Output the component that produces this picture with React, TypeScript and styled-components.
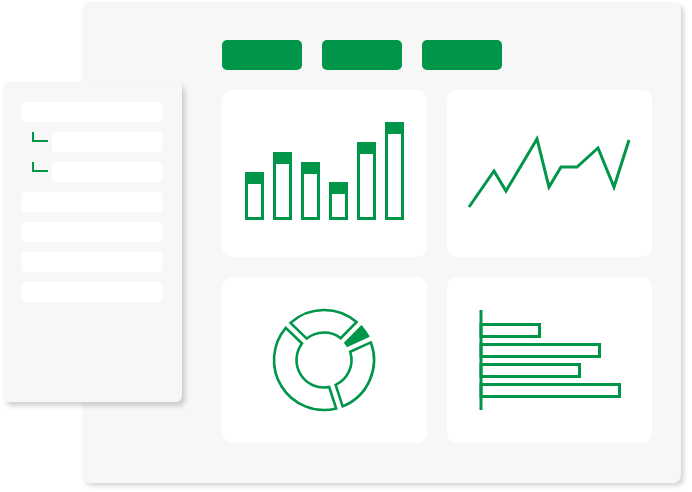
import React from "react";
import styled, { createGlobalStyle } from "styled-components";

const GREEN = "#00964a";

const Global = createGlobalStyle`
  html, body {
    margin: 0;
    padding: 0;
    background: #ffffff;
    font-family: "Liberation Sans", Arial, sans-serif;
  }
`;

const Stage = styled.div`
  position: relative;
  width: 692px;
  height: 492px;
  overflow: hidden;
`;

const Board = styled.div`
  box-sizing: border-box;
  margin: 2px 0 0 82px;
  width: 599px;
  height: 481px;
  padding: 38px 0 0 140px;
  background: #f7f7f7;
  border-radius: 8px;
  box-shadow: 3px 3px 4px rgba(0, 0, 0, 0.16);
`;

const Toolbar = styled.div`
  display: flex;
  gap: 20px;
`;

const Tab = styled.div`
  width: 80px;
  height: 30px;
  border-radius: 5px;
  background: ${GREEN};
`;

const Grid = styled.div`
  margin-top: 20px;
  display: grid;
  grid-template-columns: 205px 205px;
  grid-template-rows: 167px 166px;
  gap: 20px;
`;

const Card = styled.div`
  background: #ffffff;
  border-radius: 10px;
  overflow: hidden;
  svg {
    display: block;
  }
`;

const Sidebar = styled.div`
  position: absolute;
  left: 3px;
  top: 82px;
  box-sizing: border-box;
  width: 179px;
  height: 320px;
  padding: 20px 20px 0 19px;
  background: #f7f7f7;
  border-radius: 6px;
  box-shadow: 3px 4px 5px rgba(0, 0, 0, 0.18);
  display: flex;
  flex-direction: column;
  gap: 10px;
`;

const Row = styled.div<{ $nested?: boolean }>`
  position: relative;
  height: 20px;
  margin-left: ${(p) => (p.$nested ? "30px" : "0")};
  background: #ffffff;
  border-radius: 3px;
  &::before {
    content: "";
    display: ${(p) => (p.$nested ? "block" : "none")};
    position: absolute;
    left: -20px;
    top: 0;
    width: 14px;
    height: 8px;
    border-left: 2px solid ${GREEN};
    border-bottom: 2px solid ${GREEN};
  }
`;

const bars = [
  { x: 23, top: 82 },
  { x: 51, top: 62 },
  { x: 79, top: 72 },
  { x: 107, top: 92 },
  { x: 135, top: 52 },
  { x: 163, top: 32 },
];

function BarChart() {
  const bottom = 130;
  return (
    <svg width="205" height="167" viewBox="0 0 205 167">
      {bars.map((b) => (
        <g key={b.x}>
          <rect x={b.x} y={b.top} width={19} height={12} fill={GREEN} />
          <rect
            x={b.x + 1.5}
            y={b.top + 1.5}
            width={16}
            height={bottom - b.top - 3}
            fill="none"
            stroke={GREEN}
            strokeWidth={3}
          />
        </g>
      ))}
    </svg>
  );
}

const linePoints = [
  [22, 117],
  [47, 81],
  [59, 101],
  [90, 49],
  [102, 97],
  [114, 77],
  [130, 77],
  [151, 58],
  [167, 97],
  [182, 50],
];

function LineChart() {
  return (
    <svg width="205" height="167" viewBox="0 0 205 167">
      <polyline
        points={linePoints.map((p) => p.join(",")).join(" ")}
        fill="none"
        stroke={GREEN}
        strokeWidth={3}
        strokeLinejoin="miter"
      />
    </svg>
  );
}

const CX = 102;
const CY = 83;
const R = 50;
const r = 27.5;
const HALF_GAP = 3.4;

function pt(rad: number, deg: number, side: number) {
  const off = (Math.asin(HALF_GAP / rad) * 180) / Math.PI;
  const a = ((deg + side * off) * Math.PI) / 180;
  return [CX + rad * Math.cos(a), CY + rad * Math.sin(a)];
}

function sector(a0: number, a1: number) {
  const o0 = pt(R, a0, 1);
  const o1 = pt(R, a1, -1);
  const i1 = pt(r, a1, -1);
  const i0 = pt(r, a0, 1);
  const large = a1 - a0 > 180 ? 1 : 0;
  return `M${o0[0]} ${o0[1]} A${R} ${R} 0 ${large} 1 ${o1[0]} ${o1[1]} L${i1[0]} ${i1[1]} A${r} ${r} 0 ${large} 0 ${i0[0]} ${i0[1]} Z`;
}

const segments = [
  { a0: -136, a1: -45.5, filled: false },
  { a0: -45.5, a1: -24.5, filled: true },
  { a0: -24.5, a1: 72, filled: false },
  { a0: 72, a1: 224, filled: false },
];

function DonutChart() {
  return (
    <svg width="205" height="166" viewBox="0 0 205 166">
      {segments.map((s) => (
        <path
          key={s.a0}
          d={sector(s.a0, s.a1)}
          fill={s.filled ? GREEN : "none"}
          stroke={GREEN}
          strokeWidth={2.6}
          strokeLinejoin="miter"
        />
      ))}
    </svg>
  );
}

const hbars = [
  { y: 46, right: 94 },
  { y: 66, right: 154 },
  { y: 86, right: 134 },
  { y: 106, right: 174 },
];

function HBarChart() {
  return (
    <svg width="205" height="166" viewBox="0 0 205 166">
      {hbars.map((b) => (
        <rect
          key={b.y}
          x={34}
          y={b.y + 1.5}
          width={b.right - 1.5 - 34}
          height={12}
          fill="none"
          stroke={GREEN}
          strokeWidth={3}
        />
      ))}
      <line x1={34} y1={33} x2={34} y2={133} stroke={GREEN} strokeWidth={3} />
    </svg>
  );
}

export default function App() {
  return (
    <>
      <Global />
      <Stage>
        <Board>
          <Toolbar>
            <Tab />
            <Tab />
            <Tab />
          </Toolbar>
          <Grid>
            <Card>
              <BarChart />
            </Card>
            <Card>
              <LineChart />
            </Card>
            <Card>
              <DonutChart />
            </Card>
            <Card>
              <HBarChart />
            </Card>
          </Grid>
        </Board>
        <Sidebar>
          <Row />
          <Row $nested />
          <Row $nested />
          <Row />
          <Row />
          <Row />
          <Row />
        </Sidebar>
      </Stage>
    </>
  );
}
